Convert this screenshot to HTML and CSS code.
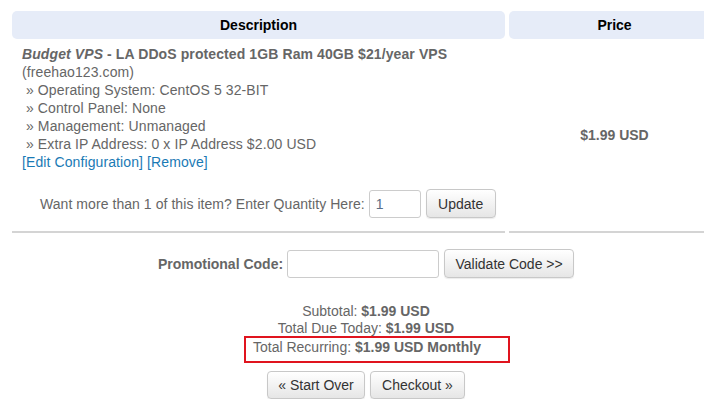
FILE: index.html
```html
<!DOCTYPE html>
<html>
<head>
<meta charset="utf-8">
<link rel="stylesheet" href="styles.css">
</head>
<body>
<div class="cart">
  <div class="grid">
    <div class="th">Description</div>
    <div class="th">Price</div>
    <div class="td desc">
      <div class="line"><strong><em>Budget VPS</em> - LA DDoS protected 1GB Ram 40GB $21/year VPS</strong></div>
      <div class="line">(freehao123.com)</div>
      <div class="line">&nbsp;» Operating System: CentOS 5 32-BIT</div>
      <div class="line">&nbsp;» Control Panel: None</div>
      <div class="line">&nbsp;» Management: Unmanaged</div>
      <div class="line">&nbsp;» Extra IP Address: 0 x IP Address $2.00 USD</div>
      <div class="line"><a href="#">[Edit Configuration]</a> <a href="#">[Remove]</a></div>
      <div class="qty">
        <span>Want more than 1 of this item? Enter Quantity Here:</span>
        <input class="input qtyin" type="text" value="1">
        <button class="btn upd">Update</button>
      </div>
    </div>
    <div class="td price">$1.99 USD</div>
  </div>

  <div class="promo">
    <span class="plabel">Promotional Code:</span>
    <input class="input promoin" type="text">
    <button class="btn validate">Validate Code &gt;&gt;</button>
  </div>

  <div class="totals">
    <div class="tline">Subtotal: <b>$1.99 USD</b></div>
    <div class="tline">Total Due Today: <b>$1.99 USD</b></div>
    <div class="tline"><span class="recurring">Total Recurring: <b>$1.99 USD Monthly</b></span></div>
  </div>

  <div class="actions">
    <button class="btn start">« Start Over</button>
    <button class="btn checkout">Checkout »</button>
  </div>
</div>
</body>
</html>
```

FILE: styles.css
```css
html, body {
  margin: 0;
  padding: 0;
  background: #fff;
}
body {
  font-family: "Liberation Sans", Arial, sans-serif;
  font-size: 14px;
  color: #666;
  overflow: hidden;
}
.cart {
  width: 708px;
  padding: 11px 0 0 12px;
}
.grid {
  display: grid;
  grid-template-columns: 493px 211px;
  column-gap: 4px;
  row-gap: 4px;
}
.th {
  background: #e6ecf8;
  border-radius: 5px;
  height: 28px;
  line-height: 28px;
  text-align: center;
  font-weight: bold;
  color: #000;
}
.td {
  border-bottom: 2px solid #d4d4d4;
}
.desc {
  padding: 2px 0 13px 10px;
}
.line {
  line-height: 18px;
  white-space: pre;
  letter-spacing: 0.1px;
}
.line strong {
  color: #666;
}
a {
  color: #1a7ab5;
  text-decoration: none;
}
.price {
  display: flex;
  align-items: center;
  justify-content: center;
  font-weight: bold;
  padding-bottom: 4px;
}
.qty {
  display: flex;
  align-items: center;
  margin-top: 18px;
  padding-left: 18px;
}
.qty span {
  margin-right: 4px;
  letter-spacing: 0.06px;
}
.input {
  box-sizing: border-box;
  border: 1px solid #ccc;
  border-radius: 3px;
  height: 28px;
  font-family: "Liberation Sans", Arial, sans-serif;
  font-size: 14px;
  color: #555;
  padding: 0 6px;
  background: #fff;
  margin: 0;
  outline: none;
}
.qtyin {
  width: 52px;
  color: #5a6d85;
}
.btn {
  box-sizing: border-box;
  height: 29px;
  border: 1px solid #c8c8c8;
  border-radius: 4px;
  background: linear-gradient(#ffffff, #e6e6e6);
  color: #333;
  font-family: "Liberation Sans", Arial, sans-serif;
  font-size: 14px;
  padding: 0;
  margin: 0;
  box-shadow: 0 1px 1px rgba(0,0,0,0.08);
}
.upd {
  width: 70px;
  margin-left: 5px;
}
.promo {
  display: flex;
  justify-content: center;
  align-items: center;
  margin-top: 16px;
}
.plabel {
  font-weight: bold;
  margin-right: 4px;
}
.promoin {
  width: 152px;
}
.validate {
  width: 130px;
  margin-left: 5px;
}
.totals {
  margin-top: 25px;
  text-align: center;
}
.tline {
  line-height: 17px;
}
.recurring {
  display: inline-block;
  border: 2px solid #e0141e;
  padding: 0 27px 5px 7px;
  margin-left: 22px;
  line-height: 18px;
  margin-top: -1px;
}
.actions {
  display: flex;
  justify-content: center;
  gap: 5px;
  margin-top: 8px;
}
.start {
  width: 98px;
  height: 28px;
}
.checkout {
  width: 95px;
  height: 28px;
}
```
